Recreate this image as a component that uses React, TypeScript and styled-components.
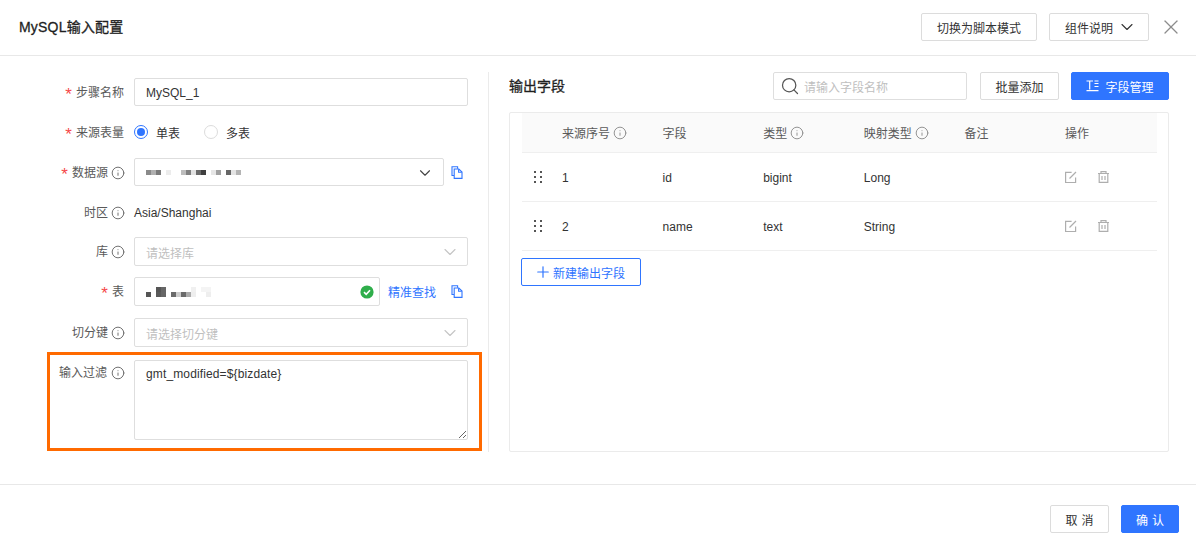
import React from "react";
import styled, { createGlobalStyle } from "styled-components";
import { ChevronDown, Info, Plus, Search, X } from "lucide-react";

const Global = createGlobalStyle`
  html, body { margin: 0; padding: 0; background: #fff; }
  body { font-family: "Liberation Sans", "Noto Sans CJK SC", sans-serif; font-size: 12px; color: #333; }
  *, *::before, *::after { box-sizing: border-box; }
`;

const Page = styled.div`
  width: 1196px; height: 552px; display: flex; flex-direction: column; overflow: hidden; background: #fff;
`;
const Header = styled.header`
  height: 56px; flex: none; display: flex; align-items: center; padding: 0 13px 0 19px; border-bottom: 1px solid #e8e8e8;
`;
const Title = styled.h1`
  margin: -2px 0 0; flex: 1; font-size: 14px; line-height: 20px; font-weight: 400; letter-spacing: 0.2px; color: #1f1f1f; -webkit-text-stroke: 0.3px #1f1f1f;
`;
const Button = styled.button<{ $w: number; $primary?: boolean }>`
  width: ${(p) => p.$w}px; height: 28px; flex: none; padding: 0;
  display: inline-flex; align-items: center; justify-content: center; gap: 6px;
  border: 1px solid ${(p) => (p.$primary ? "#2f75ff" : "#dcdcdc")}; border-radius: 2px;
  background: ${(p) => (p.$primary ? "#2f75ff" : "#fff")}; color: ${(p) => (p.$primary ? "#fff" : "#333")};
  font: inherit; font-size: 12px;
`;
const HeaderActions = styled.div`
  display: flex; align-items: center; gap: 12px; margin-top: -1px;
`;
const HeaderChevron = styled(ChevronDown)`
  margin: 0 -4px 0 -2px;
`;
const CloseIcon = styled(X)`
  margin-left: -2px; color: #8c8c8c;
`;
const Body = styled.main`
  flex: none; height: 429px; display: flex; padding-top: 16px; border-bottom: 1px solid #e8e8e8;
`;
const LeftPanel = styled.section`
  width: 489px; height: 380px; flex: none; padding-top: 6px; border-right: 1px solid #ebebeb;
`;
const Row = styled.div<{ $top?: number; $highlight?: boolean; $h?: number }>`
  position: relative; display: flex; align-items: ${(p) => (p.$highlight ? "flex-start" : "center")};
  height: ${(p) => p.$h ?? 28}px; margin-top: ${(p) => p.$top ?? 0}px;
  ${(p) => p.$highlight && `
    &::after { content: ""; position: absolute; left: 47px; top: -8px; width: 435px; height: 99px; border: 3px solid #ff6a00; pointer-events: none; }
  `}
`;
const Label = styled.label<{ $highlight?: boolean }>`
  width: 124px; flex: none; display: flex; align-items: center; justify-content: flex-end; gap: 3px;
  color: #595959; line-height: 18px; margin-right: 10px; margin-top: ${(p) => (p.$highlight ? 4 : 1)}px;
`;
const Star = styled.span`
  color: #f5484a; font-size: 17px; line-height: 12px; height: 8px; margin-right: 1px;
`;
const InfoIcon = styled(Info)<{ $extra?: number }>`
  color: #666; flex: none; margin: 0 -1px 0 ${(p) => p.$extra ?? 0}px;
`;
const Field = styled.div<{ $w?: number; $disabled?: boolean }>`
  width: ${(p) => p.$w ?? 334}px; height: 100%; flex: none; display: flex; align-items: center; justify-content: space-between;
  padding: 1px 11px 0; border: 1px solid #dedede; border-radius: 2px; background: #fff;
  color: ${(p) => (p.$disabled ? "#bfbfbf" : "#333")};
`;
const ChevronDark = styled(ChevronDown)`
  color: #444; margin-right: -2px;
`;
const ChevronLight = styled(ChevronDown)`
  color: #c4c4c4; margin-right: -4px;
`;
const RadioGroup = styled.div`
  display: flex; align-items: center;
`;
const RadioDot = styled.span<{ $on?: boolean }>`
  width: 14px; height: 14px; border-radius: 50%; display: inline-flex; align-items: center; justify-content: center;
  border: 1px solid ${(p) => (p.$on ? "#2f75ff" : "#dcdcdc")}; margin-right: 8px;
  &::after { content: ""; width: 8px; height: 8px; border-radius: 50%; background: ${(p) => (p.$on ? "#2f75ff" : "transparent")}; }
`;
const RadioText = styled.span<{ $w: number }>`
  width: ${(p) => p.$w}px;
`;
const CopyWrap = styled.span<{ $gap?: number }>`
  margin-left: ${(p) => p.$gap ?? 7}px; display: inline-flex; color: #2f75ff;
`;
const PlainText = styled.span`
  color: #333; margin-top: 1px;
`;
const Mosaic = styled.div`
  display: flex; flex-direction: column;
`;
const MosaicLine = styled.div`
  display: flex; height: 5px;
`;
const Cell = styled.i<{ $c: string }>`
  width: 5px; height: 5px; background: ${(p) => p.$c};
`;
const TextLink = styled.span`
  color: #2f75ff; margin-left: 8px; white-space: nowrap;
`;
const StatusBadge = styled.span`
  display: inline-flex; margin-right: -6px;
`;
const Area = styled.textarea`
  width: 334px; height: 80px; flex: none; padding: 4px 11px; border: 1px solid #dedede; border-radius: 2px; outline: none;
  font: inherit; font-size: 12px; line-height: 18px; letter-spacing: 0.13px; color: #333; resize: vertical; background: #fff;
`;
const RightPanel = styled.section`
  flex: 1; padding: 0 27px 0 20px; display: flex; flex-direction: column;
`;
const Toolbar = styled.div`
  display: flex; align-items: center; height: 28px; gap: 12px;
`;
const SectionTitle = styled.h2`
  flex: 1; margin: -2px 0 0; font-size: 14px; font-weight: 400; color: #1f1f1f; -webkit-text-stroke: 0.3px #1f1f1f;
`;
const SearchBox = styled.div`
  width: 194px; height: 28px; display: flex; align-items: center; gap: 4px; padding: 0 6px; margin-right: 1px;
  border: 1px solid #dedede; border-radius: 2px; color: #bfbfbf;
`;
const SearchIcon = styled(Search)`
  color: #555; flex: none;
`;
const TablePanel = styled.div`
  margin-top: 12px; height: 340px; border: 1px solid #ebebeb; border-radius: 2px; padding: 0 11px 0 12px;
`;
const TableRow = styled.div<{ $head?: boolean }>`
  display: grid; grid-template-columns: 40px repeat(5, 100.6px) 1fr; align-items: center;
  height: ${(p) => (p.$head ? 40 : 49)}px; border-bottom: 1px solid #efefef; padding-top: ${(p) => (p.$head ? 0 : 1)}px;
  background: ${(p) => (p.$head ? "#fafafa" : "#fff")}; color: ${(p) => (p.$head ? "#595959" : "#333")};
`;
const HeadCell = styled.div`
  display: flex; align-items: center; gap: 3px;
`;
const HeadInfo = styled(Info)`
  color: #8c8c8c;
`;
const DragCell = styled.div`
  display: flex; padding-left: 12px; margin-top: -2px;
`;
const ActionCell = styled.div`
  display: flex; align-items: center; gap: 21px; margin-top: -1px; color: #aeaeae;
`;
const AddButton = styled.button`
  margin: 7px 0 0 -1px; width: 120px; height: 28px; padding: 0 3px 0 0; display: flex; align-items: center; justify-content: center; gap: 1px;
  border: 1px solid #2f75ff; border-radius: 2px; background: #fff; color: #2f75ff; font: inherit; font-size: 12px;
`;
const Footer = styled.footer`
  height: 67px; flex: none; display: flex; justify-content: flex-end; align-items: flex-start; gap: 12px; padding: 20px 17px 0 0;
`;
const Spaced = styled.span`
  letter-spacing: 4px; margin-right: -4px;
`;

const CopyIcon = () => (
  <svg width="12" height="13" viewBox="0 0 12 13" fill="none" stroke="currentColor" strokeWidth="1.1">
    <path d="M3 9.5H1V.8h5.6v1.9" />
    <path d="M3.2 3h4.6L11 6.1v6.3H3.2z" />
    <path d="M7.6 3.2v3h3.2" />
  </svg>
);
const CheckBadge = () => (
  <svg width="14" height="14" viewBox="0 0 14 14">
    <circle cx="7" cy="7" r="6.6" fill="#2fae4b" />
    <path d="M4 7.2l2.2 2.1L10 5.2" fill="none" stroke="#fff" strokeWidth="1.6" />
  </svg>
);
const FieldIcon = () => (
  <svg width="13" height="12" viewBox="0 0 13 12" fill="none" stroke="#fff" strokeWidth="1.2">
    <path d="M0.5 1h6.5M3.7 1v8.6M0.5 10.6h12M8.5 3.5h4M8.5 6.5h4M8.5 1h4" />
  </svg>
);
const GripIcon = () => (
  <svg width="8" height="12" viewBox="0 0 8 12" fill="#555">
    {[1, 6, 11].flatMap((y) => [1, 7].map((x) => <rect key={`${x}-${y}`} x={x - 1} y={y - 1} width="2" height="2" />))}
  </svg>
);
const EditIcon = () => (
  <svg width="12" height="12" viewBox="0 0 12 12" fill="none" stroke="currentColor" strokeWidth="1.2">
    <path d="M10.6 6.5v5H.6V1.4h6" />
    <path d="M4.5 7.5L11 1" />
  </svg>
);
const TrashIcon = () => (
  <svg width="11" height="12" viewBox="0 0 11 12" fill="none" stroke="currentColor" strokeWidth="1.2">
    <path d="M0 2.5h11M3 2.5V.6h5v1.9M1.2 2.5v8.9h8.6V2.5M4 5v4M7 5v4" />
  </svg>
);

const sourceCells = ["#8a8a8a", "#b0b0b0", "#7a7a7a", "#fff", "#ececec", "#fff", "#fff", "#bdbdbd", "#808080", "#e2e2e2", "#6a6a6a", "#3f3f3f", "#fff", "#e6e6e6", "#a0a0a0", "#fff", "#666", "#e4e4e4", "#b4b4b4"];
const tableTop = ["#fff", "#fff", "#555", "#666", "#fff", "#fff", "#fff", "#fff", "#fff", "#f0f0f0", "#fff", "#f4f4f4", "#f4f4f4"];
const tableBottom = ["#555", "#fff", "#5a5a5a", "#666", "#fff", "#6a6a6a", "#ccc", "#6a6a6a", "#aaa", "#eee", "#fff", "#fff", "#eee"];

const MosaicBlock = ({ lines }: { lines: string[][] }) => (
  <Mosaic>
    {lines.map((cells, i) => (
      <MosaicLine key={i}>
        {cells.map((c, j) => <Cell key={j} $c={c} />)}
      </MosaicLine>
    ))}
  </Mosaic>
);

const columns = [
  { t: "来源序号", info: true },
  { t: "字段" },
  { t: "类型", info: true },
  { t: "映射类型", info: true },
  { t: "备注" },
  { t: "操作" },
];
const rows = [
  ["1", "id", "bigint", "Long"],
  ["2", "name", "text", "String"],
];

export default function App() {
  return (
    <Page>
      <Global />
      <Header>
        <Title>MySQL输入配置</Title>
        <HeaderActions>
          <Button $w={116}>切换为脚本模式</Button>
          <Button $w={100}>组件说明<HeaderChevron size={20} strokeWidth={1.3} /></Button>
          <CloseIcon size={24} strokeWidth={1.3} />
        </HeaderActions>
      </Header>
      <Body>
        <LeftPanel>
          <Row>
            <Label><Star>*</Star>步骤名称</Label>
            <Field>MySQL_1</Field>
          </Row>
          <Row $top={12}>
            <Label><Star>*</Star>来源表量</Label>
            <RadioGroup>
              <RadioDot $on />
              <RadioText $w={48}>单表</RadioText>
              <RadioDot />
              <RadioText $w={30}>多表</RadioText>
            </RadioGroup>
          </Row>
          <Row $top={12}>
            <Label><Star>*</Star>数据源<InfoIcon size={14} strokeWidth={1.6} /></Label>
            <Field $w={310}>
              <MosaicBlock lines={[sourceCells]} />
              <ChevronDark size={18} strokeWidth={1.5} />
            </Field>
            <CopyWrap><CopyIcon /></CopyWrap>
          </Row>
          <Row $top={12}>
            <Label>时区<InfoIcon size={14} strokeWidth={1.6} /></Label>
            <PlainText>Asia/Shanghai</PlainText>
          </Row>
          <Row $top={11} $h={29}>
            <Label>库<InfoIcon size={14} strokeWidth={1.6} /></Label>
            <Field $disabled>请选择库<ChevronLight size={20} strokeWidth={1.3} /></Field>
          </Row>
          <Row $top={11} $h={29}>
            <Label><Star>*</Star>表</Label>
            <Field $w={246}>
              <MosaicBlock lines={[tableTop, tableBottom]} />
              <StatusBadge><CheckBadge /></StatusBadge>
            </Field>
            <TextLink>精准查找</TextLink>
            <CopyWrap $gap={15}><CopyIcon /></CopyWrap>
          </Row>
          <Row $top={12} $h={29}>
            <Label>切分键<InfoIcon size={14} strokeWidth={1.6} /></Label>
            <Field $disabled>请选择切分键<ChevronLight size={20} strokeWidth={1.3} /></Field>
          </Row>
          <Row $top={13} $h={80} $highlight>
            <Label $highlight>输入过滤<InfoIcon size={14} strokeWidth={1.6} $extra={1} /></Label>
            <Area defaultValue={"gmt_modified=${bizdate}"} />
          </Row>
        </LeftPanel>
        <RightPanel>
          <Toolbar>
            <SectionTitle>输出字段</SectionTitle>
            <SearchBox><SearchIcon size={20} strokeWidth={1.5} />请输入字段名称</SearchBox>
            <Button $w={79}>批量添加</Button>
            <Button $w={98} $primary><FieldIcon />字段管理</Button>
          </Toolbar>
          <TablePanel>
            <TableRow $head>
              <div />
              {columns.map((c) => (
                <HeadCell key={c.t}>{c.t}{c.info && <HeadInfo size={14} strokeWidth={1.6} />}</HeadCell>
              ))}
            </TableRow>
            {rows.map((r) => (
              <TableRow key={r[0]}>
                <DragCell><GripIcon /></DragCell>
                {r.map((v) => <div key={v}>{v}</div>)}
                <div />
                <ActionCell><EditIcon /><TrashIcon /></ActionCell>
              </TableRow>
            ))}
            <AddButton><Plus size={18} strokeWidth={1.6} />新建输出字段</AddButton>
          </TablePanel>
        </RightPanel>
      </Body>
      <Footer>
        <Button $w={59}><Spaced>取消</Spaced></Button>
        <Button $w={58} $primary><Spaced>确认</Spaced></Button>
      </Footer>
    </Page>
  );
}
